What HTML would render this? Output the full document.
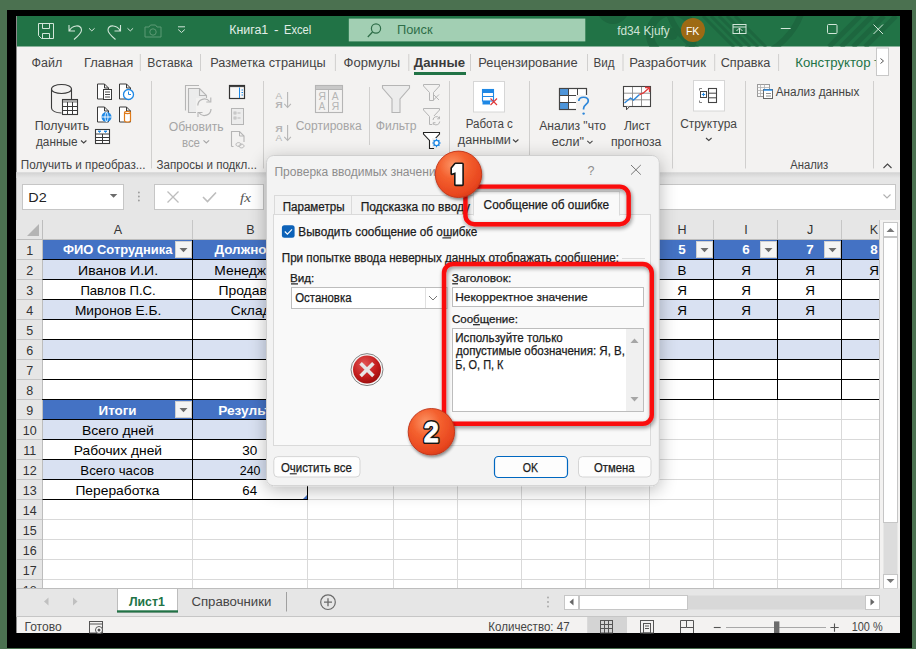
<!DOCTYPE html>
<html><head><meta charset="utf-8"><style>
html,body{margin:0;padding:0;width:916px;height:649px;overflow:hidden;background:#4b7150}
svg{display:block;font-family:'Liberation Sans', sans-serif}
</style></head><body>
<svg width="916" height="649" viewBox="0 0 916 649">
<defs>
<radialGradient id="gOrange" cx="0.38" cy="0.3" r="0.75">
 <stop offset="0" stop-color="#fb9466"/>
 <stop offset="0.4" stop-color="#f4612f"/>
 <stop offset="0.85" stop-color="#e8461f"/>
 <stop offset="1" stop-color="#d83c19"/>
</radialGradient>
<radialGradient id="gErr" cx="0.4" cy="0.3" r="0.8">
 <stop offset="0" stop-color="#e25555"/>
 <stop offset="0.6" stop-color="#c11a1a"/>
 <stop offset="1" stop-color="#8e0a0a"/>
</radialGradient>
<linearGradient id="gRibShadow" x1="0" y1="0" x2="0" y2="1">
 <stop offset="0" stop-color="#d2d2d2"/>
 <stop offset="1" stop-color="#e6e6e6"/>
</linearGradient>
<filter id="fDlg" x="-20%" y="-20%" width="140%" height="140%">
 <feGaussianBlur in="SourceAlpha" stdDeviation="9"/>
 <feOffset dx="0" dy="4"/>
 <feComponentTransfer><feFuncA type="linear" slope="0.28"/></feComponentTransfer>
 <feMerge><feMergeNode/><feMergeNode in="SourceGraphic"/></feMerge>
</filter>
<filter id="fRed" x="-20%" y="-20%" width="140%" height="140%">
 <feGaussianBlur in="SourceAlpha" stdDeviation="2.2"/>
 <feOffset dx="1" dy="2"/>
 <feComponentTransfer><feFuncA type="linear" slope="0.45"/></feComponentTransfer>
 <feMerge><feMergeNode/><feMergeNode in="SourceGraphic"/></feMerge>
</filter>
<filter id="fCirc" x="-30%" y="-30%" width="160%" height="160%">
 <feGaussianBlur in="SourceAlpha" stdDeviation="1.8"/>
 <feOffset dx="1" dy="2"/>
 <feComponentTransfer><feFuncA type="linear" slope="0.45"/></feComponentTransfer>
 <feMerge><feMergeNode/><feMergeNode in="SourceGraphic"/></feMerge>
</filter>
<clipPath id="cTitle"><rect x="16" y="16" width="884" height="30.5"/></clipPath>
<clipPath id="cGrid"><rect x="16" y="220" width="863.5" height="368.5"/></clipPath>
</defs>
<rect x="0" y="0" width="916.00" height="649.00" fill="#4b7150" />
<rect x="7" y="10" width="905.00" height="638.00" fill="#000" />
<rect x="16" y="16" width="884.00" height="617.00" fill="#f3f2f1" />
<rect x="16" y="16" width="884.00" height="30.50" fill="#217346" />
<g clip-path="url(#cTitle)" fill="none" opacity="1">
<circle cx="613" cy="8" r="16" fill="#1d673f" />
<circle cx="672" cy="34" r="22" fill="none" stroke="#1d673f" stroke-width="8" />
<circle cx="672" cy="34" r="6" fill="#1d673f" />
<circle cx="735" cy="-10" r="70" fill="none" stroke="#1d673f" stroke-width="6" />
<line x1="703" y1="16" x2="734" y2="47" stroke="#1d673f" stroke-width="3" />
<line x1="711" y1="16" x2="742" y2="47" stroke="#1d673f" stroke-width="3" />
<line x1="719" y1="16" x2="750" y2="47" stroke="#1d673f" stroke-width="3" />
<line x1="727" y1="16" x2="758" y2="47" stroke="#1d673f" stroke-width="3" />
<line x1="735" y1="16" x2="766" y2="47" stroke="#1d673f" stroke-width="3" />
<line x1="860" y1="16" x2="829" y2="47" stroke="#1d673f" stroke-width="5" />
<line x1="872" y1="16" x2="841" y2="47" stroke="#1d673f" stroke-width="5" />
<line x1="884" y1="16" x2="853" y2="47" stroke="#1d673f" stroke-width="5" />
<line x1="896" y1="16" x2="865" y2="47" stroke="#1d673f" stroke-width="5" />
</g>
<path d="M38.5,23.5 h15 v15 h-12 l-3,-3 z M42.5,23.5 v5 h7 v-5 M42.5,38.5 v-5 h7 v5" fill="none" stroke="#d2e6d9" stroke-width="1" />
<path d="M69,25 v6 h6 M69.5,30.5 C72,25 81,24 81.5,30 C81.5,33 77,37 74,39.5" fill="none" stroke="#d2e6d9" stroke-width="1.1" />
<path d="M89,28.3 l2.8,2.6 l2.8,-2.6" fill="none" stroke="#d2e6d9" stroke-width="1" />
<path d="M120.5,25 v6 h-6 M120,30.5 C117.5,25 108.5,24 108,30 C108,33 112.5,37 115.5,39.5" fill="none" stroke="#d2e6d9" stroke-width="1.1" />
<path d="M127.5,28.3 l2.8,2.6 l2.8,-2.6" fill="none" stroke="#d2e6d9" stroke-width="1" />
<path d="M145,27 h4 l1.5,-2 h5 l1.5,2 h4 v10 h-16 z" fill="none" stroke="#5d9a74" stroke-width="1" />
<circle cx="153" cy="32" r="3.2" fill="none" stroke="#5d9a74" stroke-width="1" />
<line x1="178" y1="26.8" x2="185" y2="26.8" stroke="#d2e6d9" stroke-width="1" />
<path d="M178.2,29.5 l3.3,3 l3.3,-3" fill="none" stroke="#d2e6d9" stroke-width="1" />
<text x="229.19" y="34.30" font-size="12.5" fill="#e3eee7" textLength="39.01" lengthAdjust="spacingAndGlyphs" >Книга1</text>
<text x="274.10" y="34.30" font-size="12.5" fill="#e3eee7" textLength="4.50" lengthAdjust="spacingAndGlyphs" >-</text>
<text x="284.09" y="34.30" font-size="12.5" fill="#e3eee7" textLength="27.15" lengthAdjust="spacingAndGlyphs" >Excel</text>
<rect x="348.8" y="18.6" width="236.50" height="22.80" fill="#a2cfb3" />
<circle cx="376" cy="28.5" r="4.6" fill="none" stroke="#2f6e49" stroke-width="1.2" />
<line x1="372.5" y1="32" x2="367.8" y2="37" stroke="#2f6e49" stroke-width="1.3" />
<text x="396.96" y="34.30" font-size="12.5" fill="#2f6e49" textLength="35.58" lengthAdjust="spacingAndGlyphs" >Поиск</text>
<text x="617.13" y="34.50" font-size="12.5" fill="#cfe3d6" textLength="52.59" lengthAdjust="spacingAndGlyphs" >fd34 Kjufy</text>
<circle cx="693" cy="30" r="12" fill="#9d6a14" />
<text x="685.88" y="34.60" font-size="11" fill="#fff" textLength="13.48" lengthAdjust="spacingAndGlyphs" >FK</text>
<rect x="733" y="24.5" width="13.00" height="9.00" fill="none" stroke="#d2e6d9" stroke-width="1" />
<line x1="733" y1="27" x2="746" y2="27" stroke="#d2e6d9" stroke-width="1" />
<path d="M736.5,31 l3,-3 l3,3 M739.5,28 v5" fill="none" stroke="#d2e6d9" stroke-width="1" />
<line x1="780.8" y1="28.5" x2="790.6" y2="28.5" stroke="#d2e6d9" stroke-width="1" />
<rect x="827.5" y="24.5" width="9.50" height="9.00" fill="none" stroke="#d2e6d9" stroke-width="1" rx="1" />
<path d="M873.5,24.5 l9.5,9.5 M883,24.5 l-9.5,9.5" fill="none" stroke="#d2e6d9" stroke-width="1" />
<line x1="16.5" y1="16" x2="16.5" y2="633" stroke="#8a8a8a" stroke-width="1" />
<text x="31.58" y="66.90" font-size="12.5" fill="#444" textLength="30.68" lengthAdjust="spacingAndGlyphs" >Файл</text>
<text x="83.95" y="66.90" font-size="12.5" fill="#444" textLength="49.33" lengthAdjust="spacingAndGlyphs" >Главная</text>
<text x="147.30" y="66.90" font-size="12.5" fill="#444" textLength="45.30" lengthAdjust="spacingAndGlyphs" >Вставка</text>
<text x="210.26" y="66.90" font-size="12.5" fill="#444" textLength="115.31" lengthAdjust="spacingAndGlyphs" >Разметка страницы</text>
<text x="343.55" y="66.90" font-size="12.5" fill="#444" textLength="56.65" lengthAdjust="spacingAndGlyphs" >Формулы</text>
<text x="478.25" y="66.90" font-size="12.5" fill="#444" textLength="99.31" lengthAdjust="spacingAndGlyphs" >Рецензирование</text>
<text x="593.55" y="66.90" font-size="12.5" fill="#444" textLength="21.05" lengthAdjust="spacingAndGlyphs" >Вид</text>
<text x="629.23" y="66.90" font-size="12.5" fill="#444" textLength="76.70" lengthAdjust="spacingAndGlyphs" >Разработчик</text>
<text x="720.65" y="66.90" font-size="12.5" fill="#444" textLength="49.75" lengthAdjust="spacingAndGlyphs" >Справка</text>
<text x="413.88" y="66.90" font-size="12.5" fill="#3b3b3b" font-weight="700" textLength="51.27" lengthAdjust="spacingAndGlyphs" >Данные</text>
<rect x="414" y="72" width="52.00" height="3.00" fill="#217346" />
<text x="795.22" y="66.90" font-size="12.5" fill="#217346" textLength="75.34" lengthAdjust="spacingAndGlyphs" >Конструктор</text>
<text x="874.00" y="66.90" font-size="12.5" fill="#217346" >т</text>
<line x1="140.3" y1="54" x2="140.3" y2="71" stroke="#d0cfce" stroke-width="1" />
<line x1="200.5" y1="54" x2="200.5" y2="71" stroke="#d0cfce" stroke-width="1" />
<line x1="335.4" y1="54" x2="335.4" y2="71" stroke="#d0cfce" stroke-width="1" />
<line x1="408.8" y1="54" x2="408.8" y2="71" stroke="#d0cfce" stroke-width="1" />
<line x1="470.5" y1="54" x2="470.5" y2="71" stroke="#d0cfce" stroke-width="1" />
<line x1="587.5" y1="54" x2="587.5" y2="71" stroke="#d0cfce" stroke-width="1" />
<line x1="623" y1="54" x2="623" y2="71" stroke="#d0cfce" stroke-width="1" />
<line x1="714.7" y1="54" x2="714.7" y2="71" stroke="#d0cfce" stroke-width="1" />
<line x1="778.6" y1="54" x2="778.6" y2="71" stroke="#d0cfce" stroke-width="1" />
<rect x="876.5" y="48" width="12.00" height="27.50" fill="#fff" stroke="#c8c8c8" stroke-width="1" />
<path d="M880.5,58.5 l3,2.5 l-3,2.5" fill="none" stroke="#555" stroke-width="1" />
<rect x="16.5" y="172.5" width="883.50" height="47.50" fill="#e6e6e6" />
<rect x="16.5" y="172.5" width="883.50" height="5.50" fill="url(#gRibShadow)" />
<line x1="16.5" y1="172.5" x2="900" y2="172.5" stroke="#dcdcdc" stroke-width="1" />
<line x1="151.5" y1="81" x2="151.5" y2="168.5" stroke="#d0cfce" stroke-width="1" />
<line x1="263.5" y1="81" x2="263.5" y2="168.5" stroke="#d0cfce" stroke-width="1" />
<line x1="529.5" y1="81" x2="529.5" y2="168.5" stroke="#d0cfce" stroke-width="1" />
<line x1="672.5" y1="81" x2="672.5" y2="168.5" stroke="#d0cfce" stroke-width="1" />
<line x1="745.5" y1="81" x2="745.5" y2="168.5" stroke="#d0cfce" stroke-width="1" />
<line x1="873.5" y1="81" x2="873.5" y2="168.5" stroke="#d0cfce" stroke-width="1" />
<text x="20.76" y="169.30" font-size="12.3" fill="#444" textLength="124.81" lengthAdjust="spacingAndGlyphs" >Получить и преобраз...</text>
<text x="156.62" y="169.30" font-size="12.3" fill="#444" textLength="100.33" lengthAdjust="spacingAndGlyphs" >Запросы и подкл...</text>
<text x="790.18" y="168.60" font-size="12.3" fill="#444" textLength="38.05" lengthAdjust="spacingAndGlyphs" >Анализ</text>
<line x1="369.5" y1="87" x2="369.5" y2="145" stroke="#d0cfce" stroke-width="1" />
<line x1="449.5" y1="81" x2="449.5" y2="168.5" stroke="#d0cfce" stroke-width="1" />
<path d="M51.5,89 v19 c0,3 4.5,5 10,5 M51.5,89 c0,-2.8 4.5,-4.5 10,-4.5 c5.5,0 10,1.7 10,4.5 c0,2.8 -4.5,4.5 -10,4.5 c-5.5,0 -10,-1.7 -10,-4.5 M71.5,89 v10" fill="none" stroke="#3a3a3a" stroke-width="1.1" />
<rect x="62.5" y="99.5" width="15.00" height="15.00" fill="#fff" stroke="#3a3a3a" stroke-width="1.1" />
<rect x="63" y="100" width="14.00" height="2.80" fill="#a8a8a8" />
<line x1="62.5" y1="106.5" x2="77.5" y2="106.5" stroke="#3a3a3a" stroke-width="1" />
<line x1="62.5" y1="110.5" x2="77.5" y2="110.5" stroke="#3a3a3a" stroke-width="1" />
<line x1="67.5" y1="102" x2="67.5" y2="114.5" stroke="#3a3a3a" stroke-width="1" />
<line x1="72.5" y1="102" x2="72.5" y2="114.5" stroke="#3a3a3a" stroke-width="1" />
<text x="34.70" y="129.90" font-size="12.5" fill="#444" textLength="54.61" lengthAdjust="spacingAndGlyphs" >Получить</text>
<text x="35.98" y="145.60" font-size="12.5" fill="#444" textLength="41.54" lengthAdjust="spacingAndGlyphs" >данные</text>
<path d="M81,140.5 l2.7,2.5 l2.7,-2.5" fill="none" stroke="#444" stroke-width="1.1" />
<path d="M97.5,84.0 h7 l4,4 v11 h-11 z M104.5,84.0 v4 h4" fill="#fff" stroke="#3a3a3a" stroke-width="1" />
<rect x="103.5" y="89.5" width="8.00" height="10.00" fill="#fff" stroke="#3a3a3a" stroke-width="1" />
<line x1="105" y1="92" x2="110" y2="92" stroke="#3a3a3a" stroke-width="0.9" />
<line x1="105" y1="94.5" x2="110" y2="94.5" stroke="#3a3a3a" stroke-width="0.9" />
<line x1="105" y1="97" x2="110" y2="97" stroke="#3a3a3a" stroke-width="0.9" />
<path d="M119.5,84.0 h7 l4,4 v11 h-11 z M126.5,84.0 v4 h4" fill="#fff" stroke="#3a3a3a" stroke-width="1" />
<circle cx="128.5" cy="94.5" r="5" fill="#fff" stroke="#1e88e5" stroke-width="1.3" />
<path d="M128.5,91.5 v3 h2.5" fill="none" stroke="#1e88e5" stroke-width="1" />
<path d="M97.5,107.0 h7 l4,4 v11 h-11 z M104.5,107.0 v4 h4" fill="#fff" stroke="#3a3a3a" stroke-width="1" />
<circle cx="106.5" cy="117" r="5" fill="#1e88e5" />
<path d="M101.5,117 h10 M106.5,112 c-2,3 -2,7 0,10 M106.5,112 c2,3 2,7 0,10" fill="none" stroke="#fff" stroke-width="0.9" />
<path d="M119.5,107.0 h7 l4,4 v11 h-11 z M126.5,107.0 v4 h4" fill="#fff" stroke="#3a3a3a" stroke-width="1" />
<path d="M124.5,112.5 c0,-1.5 6,-1.5 6,0 v8 c0,2 -6,2 -6,0 z M124.5,112.5 c0,1.5 6,1.5 6,0" fill="#fff" stroke="#e07b1a" stroke-width="1.2" />
<rect x="95.5" y="129.5" width="14.00" height="14.00" fill="#fff" stroke="#3a3a3a" stroke-width="1.1" />
<path d="M98,131 l1.5,1.5 l1.5,-1.5 z M104,131 l1.5,1.5 l1.5,-1.5 z" fill="#1e88e5" stroke="#1e88e5" stroke-width="0.8" />
<line x1="95.5" y1="134" x2="109.5" y2="134" stroke="#3a3a3a" stroke-width="1" />
<line x1="95.5" y1="137.5" x2="109.5" y2="137.5" stroke="#3a3a3a" stroke-width="1" />
<line x1="95.5" y1="140.5" x2="109.5" y2="140.5" stroke="#3a3a3a" stroke-width="1" />
<line x1="102.5" y1="134" x2="102.5" y2="143.5" stroke="#3a3a3a" stroke-width="1" />
<path d="M185.5,110.5 v-25 h13.5" fill="none" stroke="#b5b5b5" stroke-width="1.1" />
<path d="M188.5,88.5 h11 l7,7 v17 h-18 z" fill="#ececec" stroke="#b5b5b5" stroke-width="1.1" />
<path d="M199.5,88.5 v7 h7" fill="none" stroke="#b5b5b5" stroke-width="1.1" />
<rect x="196" y="98" width="16.00" height="18.00" fill="#f3f2f1" />
<path d="M197.8,105.5 a6.6,6.6 0 0 1 11.8,-4" fill="none" stroke="#b5b5b5" stroke-width="1.2" />
<path d="M210.8,97.5 v4.5 h-4.5" fill="none" stroke="#b5b5b5" stroke-width="1.1" />
<path d="M211,109 a6.6,6.6 0 0 1 -11.8,4" fill="none" stroke="#b5b5b5" stroke-width="1.2" />
<path d="M198,117 v-4.5 h4.5" fill="none" stroke="#b5b5b5" stroke-width="1.1" />
<text x="168.72" y="131.00" font-size="12.5" fill="#a5a5a5" textLength="54.97" lengthAdjust="spacingAndGlyphs" >Обновить</text>
<text x="181.91" y="146.50" font-size="12.5" fill="#a5a5a5" textLength="18.10" lengthAdjust="spacingAndGlyphs" >все</text>
<path d="M203.5,140.3 l2.8,2.6 l2.8,-2.6" fill="none" stroke="#a5a5a5" stroke-width="1.1" />
<rect x="229.5" y="85.5" width="15.00" height="13.00" fill="#f7f7f7" stroke="#333" stroke-width="1.2" />
<line x1="229.5" y1="86.6" x2="244.5" y2="86.6" stroke="#333" stroke-width="1" />
<line x1="239.5" y1="87.5" x2="239.5" y2="98" stroke="#1e88e5" stroke-width="1" />
<path d="M241.5,90 h1.5 M241.5,92.5 h1.5 M241.5,95 h1.5" fill="none" stroke="#1e88e5" stroke-width="1" />
<rect x="231.5" y="108.5" width="12.00" height="16.00" fill="#ececec" stroke="#b5b5b5" stroke-width="1" />
<rect x="234" y="112" width="2.00" height="2.00" fill="none" stroke="#b5b5b5" stroke-width="0.8" />
<line x1="237.5" y1="113" x2="240.5" y2="113" stroke="#b5b5b5" stroke-width="0.9" />
<rect x="234" y="117" width="2.00" height="2.00" fill="none" stroke="#b5b5b5" stroke-width="0.8" />
<line x1="237.5" y1="118" x2="240.5" y2="118" stroke="#b5b5b5" stroke-width="0.9" />
<path d="M231.5,146.5 v-15 h8 l4.5,4.5 v6" fill="none" stroke="#b5b5b5" stroke-width="1.1" />
<path d="M239.5,131.5 v4.5 h4.5" fill="none" stroke="#b5b5b5" stroke-width="1" />
<path d="M231.5,146.5 h2" fill="none" stroke="#b5b5b5" stroke-width="1.1" />
<path d="M236,144.5 c0,-2.5 5,-2.5 5,0 c0,2.5 -5,2.5 -5,0 M239,146 c0,-2.5 5,-2.5 5,0 c0,2.5 -5,2.5 -5,0" fill="none" stroke="#b5b5b5" stroke-width="1" />
<text x="275.48" y="98.60" font-size="9.5" fill="#b5b5b5" textLength="6.64" lengthAdjust="spacingAndGlyphs" >А</text>
<text x="275.32" y="107.90" font-size="9.5" fill="#b5b5b5" font-weight="700" textLength="7.47" lengthAdjust="spacingAndGlyphs" >Я</text>
<path d="M287.6,92 v15.5 M284.3,103.8 l3.3,3.7 l3.3,-3.7" fill="none" stroke="#b5b5b5" stroke-width="1.1" />
<text x="275.32" y="131.60" font-size="9.5" fill="#b5b5b5" font-weight="700" textLength="7.47" lengthAdjust="spacingAndGlyphs" >Я</text>
<text x="275.48" y="140.90" font-size="9.5" fill="#b5b5b5" textLength="6.64" lengthAdjust="spacingAndGlyphs" >А</text>
<path d="M287.6,125 v15.5 M284.3,136.8 l3.3,3.7 l3.3,-3.7" fill="none" stroke="#b5b5b5" stroke-width="1.1" />
<rect x="315.5" y="85.5" width="27.00" height="27.00" fill="#f3f2f1" stroke="#b5b5b5" stroke-width="1.1" />
<rect x="316" y="86" width="26.00" height="3.50" fill="#c8c8c8" />
<line x1="315.5" y1="89.5" x2="342.5" y2="89.5" stroke="#b5b5b5" stroke-width="1" />
<line x1="328.5" y1="89.5" x2="328.5" y2="112.5" stroke="#b5b5b5" stroke-width="1" />
<text x="318.19" y="100.00" font-size="10" fill="#b5b5b5" textLength="7.78" lengthAdjust="spacingAndGlyphs" >Я</text>
<text x="318.68" y="109.80" font-size="10" fill="#b5b5b5" textLength="6.44" lengthAdjust="spacingAndGlyphs" >А</text>
<text x="331.88" y="100.00" font-size="10" fill="#b5b5b5" textLength="6.84" lengthAdjust="spacingAndGlyphs" >А</text>
<text x="331.59" y="109.80" font-size="10" fill="#b5b5b5" textLength="7.78" lengthAdjust="spacingAndGlyphs" >Я</text>
<text x="295.69" y="130.20" font-size="12.5" fill="#a5a5a5" textLength="65.91" lengthAdjust="spacingAndGlyphs" >Сортировка</text>
<path d="M382.5,85.5 h27 v2.5 l-9.5,11 v13.5 h-8 v-13.5 l-9.5,-11 z" fill="#ececec" stroke="#b5b5b5" stroke-width="1.1" />
<text x="375.71" y="130.20" font-size="12.5" fill="#a5a5a5" textLength="40.88" lengthAdjust="spacingAndGlyphs" >Фильтр</text>
<path d="M423.5,84.5 h16 v1.5 l-6,6.5 v8 h-4 v-8 l-6,-6.5 z" fill="none" stroke="#b5b5b5" stroke-width="1" />
<path d="M433.5,94.5 l5.5,5.5 M439,94.5 l-5.5,5.5" fill="none" stroke="#b5b5b5" stroke-width="1" />
<path d="M423.5,108.5 h16 v1.5 l-6,6.5 v8 h-4 v-8 l-6,-6.5 z" fill="none" stroke="#b5b5b5" stroke-width="1" />
<rect x="432" y="116" width="9.00" height="10.00" fill="#f3f2f1" />
<path d="M433,120 a3.5,3.5 0 0 1 6.3,-2 M439.5,116.5 v2.3 h-2.3 M439.7,121.5 a3.5,3.5 0 0 1 -6.3,2 M433.2,125 v-2.3 h2.3" fill="none" stroke="#b5b5b5" stroke-width="1" />
<path d="M423.5,132.5 h16 v1.5 l-6,6.5 v8 h-4 v-8 l-6,-6.5 z" fill="#fff" stroke="#222" stroke-width="1.1" />
<rect x="432" y="138" width="10.00" height="10.00" fill="#f3f2f1" />
<circle cx="436.5" cy="143" r="2.6" fill="#fff" stroke="#1e88e5" stroke-width="1.3" />
<path d="M436.5,138.8 v1.5 M436.5,145.7 v1.5 M432.3,143 h1.5 M439.2,143 h1.5 M433.6,140.1 l1,1 M438.4,144.9 l1,1 M433.6,145.9 l1,-1 M438.4,141.1 l1,-1" fill="none" stroke="#1e88e5" stroke-width="1.1" />
<rect x="473.5" y="81.5" width="31.00" height="30.50" fill="#fff" stroke="#d6d6d6" stroke-width="1" />
<rect x="482.5" y="89.5" width="11.00" height="11.50" fill="#fff" stroke="#1e88e5" stroke-width="1.1" />
<rect x="482.5" y="89.5" width="11.00" height="3.50" fill="#1e88e5" />
<line x1="482.5" y1="96.5" x2="493.5" y2="96.5" stroke="#1e88e5" stroke-width="1" />
<rect x="482.5" y="101" width="7.50" height="3.50" fill="#1e88e5" />
<path d="M490.5,98.5 l6.5,6.5 M497,98.5 l-6.5,6.5" fill="none" stroke="#e03a3a" stroke-width="1.2" />
<text x="465.66" y="128.00" font-size="12.5" fill="#444" textLength="47.24" lengthAdjust="spacingAndGlyphs" >Работа с</text>
<text x="457.88" y="144.40" font-size="12.5" fill="#444" textLength="53.00" lengthAdjust="spacingAndGlyphs" >данными</text>
<path d="M513,139.5 l2.7,2.5 l2.7,-2.5" fill="none" stroke="#444" stroke-width="1.1" />
<rect x="559.5" y="88.5" width="27.00" height="21.00" fill="#fff" stroke="#444" stroke-width="1.1" />
<rect x="559.5" y="88.5" width="9.00" height="7.00" fill="#4e95d9" />
<rect x="559.5" y="102.5" width="9.00" height="7.00" fill="#4e95d9" />
<line x1="559.5" y1="95.5" x2="586.5" y2="95.5" stroke="#444" stroke-width="1" />
<line x1="559.5" y1="102.5" x2="586.5" y2="102.5" stroke="#444" stroke-width="1" />
<line x1="568.5" y1="88.5" x2="568.5" y2="109.5" stroke="#444" stroke-width="1" />
<line x1="577.5" y1="88.5" x2="577.5" y2="109.5" stroke="#444" stroke-width="1" />
<rect x="559.5" y="88.5" width="27.00" height="21.00" fill="none" stroke="#444" stroke-width="1.1" />
<rect x="576" y="95" width="15.00" height="20.00" fill="#f3f2f1" />
<path d="M578.8,101 c0,-5 9.5,-5 9.5,0 c0,3.3 -4.7,3.6 -4.7,7.3 v1.2" fill="none" stroke="#2d86d9" stroke-width="1.7" />
<circle cx="583.6" cy="113.6" r="1.2" fill="#2d86d9" />
<text x="539.18" y="129.90" font-size="12.5" fill="#444" textLength="66.93" lengthAdjust="spacingAndGlyphs" >Анализ "что</text>
<text x="551.66" y="145.50" font-size="12.5" fill="#444" textLength="32.38" lengthAdjust="spacingAndGlyphs" >если"</text>
<path d="M587.3,140.8 l2.6,2.5 l2.6,-2.5" fill="none" stroke="#444" stroke-width="1.1" />
<rect x="623.5" y="86.5" width="27.00" height="20.00" fill="#fff" stroke="#444" stroke-width="1" />
<line x1="623.5" y1="93.2" x2="650.5" y2="93.2" stroke="#888" stroke-width="0.9" />
<line x1="623.5" y1="99.8" x2="650.5" y2="99.8" stroke="#888" stroke-width="0.9" />
<line x1="632.5" y1="86.5" x2="632.5" y2="106.5" stroke="#888" stroke-width="0.9" />
<line x1="641.5" y1="86.5" x2="641.5" y2="106.5" stroke="#888" stroke-width="0.9" />
<rect x="623.5" y="86.5" width="27.00" height="20.00" fill="none" stroke="#444" stroke-width="1.1" />
<path d="M624.5,103 l6,-5 l3,2 l6,-5.5" fill="none" stroke="#2d86d9" stroke-width="1.4" />
<path d="M639.5,94.5 l4,-1.5 l5.5,-5" fill="none" stroke="#e03a3a" stroke-width="1.4" />
<path d="M645,87.5 h4.5 v4.5" fill="none" stroke="#e03a3a" stroke-width="1.3" />
<path d="M626.5,106.5 v3.3 l3,-3.3" fill="#fff" stroke="#444" stroke-width="1" />
<text x="623.89" y="129.90" font-size="12.5" fill="#444" textLength="26.31" lengthAdjust="spacingAndGlyphs" >Лист</text>
<text x="610.96" y="145.50" font-size="12.5" fill="#444" textLength="50.44" lengthAdjust="spacingAndGlyphs" >прогноза</text>
<rect x="693.5" y="80.5" width="31.00" height="30.50" fill="#fff" stroke="#d6d6d6" stroke-width="1" />
<rect x="708.5" y="88.5" width="8.00" height="14.00" fill="none" stroke="#444" stroke-width="1.1" />
<line x1="708.5" y1="93.2" x2="716.5" y2="93.2" stroke="#444" stroke-width="1" />
<line x1="708.5" y1="97.8" x2="716.5" y2="97.8" stroke="#444" stroke-width="1" />
<rect x="700.5" y="91.5" width="6.00" height="6.00" fill="none" stroke="#444" stroke-width="1" />
<path d="M701.8,94.5 h3.4 M703.5,92.8 v3.4" fill="none" stroke="#1e88e5" stroke-width="1.1" />
<path d="M702,88.5 h-2.5 v2 M702,102.5 h-2.5 v-2" fill="none" stroke="#777" stroke-width="0.9" />
<text x="680.19" y="128.00" font-size="12.5" fill="#444" textLength="56.81" lengthAdjust="spacingAndGlyphs" >Структура</text>
<path d="M706,138 l2.8,2.5 l2.8,-2.5" fill="none" stroke="#444" stroke-width="1.1" />
<rect x="757.5" y="84.5" width="12.00" height="12.00" fill="#fafafa" stroke="#9a9a9a" stroke-width="1" />
<line x1="757.5" y1="87.5" x2="769.5" y2="87.5" stroke="#b0b0b0" stroke-width="0.8" />
<line x1="757.5" y1="90.5" x2="769.5" y2="90.5" stroke="#b0b0b0" stroke-width="0.8" />
<line x1="757.5" y1="93.5" x2="769.5" y2="93.5" stroke="#b0b0b0" stroke-width="0.8" />
<line x1="760.5" y1="84.5" x2="760.5" y2="96.5" stroke="#b0b0b0" stroke-width="0.8" />
<line x1="764.5" y1="84.5" x2="764.5" y2="96.5" stroke="#b0b0b0" stroke-width="0.8" />
<rect x="763.5" y="89.5" width="9.00" height="9.00" fill="#fff" stroke="#666" stroke-width="1" />
<line x1="763.5" y1="90" x2="772.5" y2="90" stroke="#1e88e5" stroke-width="1.4" />
<line x1="766" y1="93.5" x2="771" y2="93.5" stroke="#777" stroke-width="0.8" />
<line x1="766" y1="96" x2="771" y2="96" stroke="#777" stroke-width="0.8" />
<text x="775.78" y="96.00" font-size="12.5" fill="#444" textLength="83.65" lengthAdjust="spacingAndGlyphs" >Анализ данных</text>
<path d="M883.5,168 l4,-4 l4,4" fill="none" stroke="#444" stroke-width="1.1" />
<rect x="22.5" y="184.5" width="101.00" height="25.00" fill="#fff" stroke="#c6c6c6" stroke-width="1" />
<text x="28.32" y="202.00" font-size="12.5" fill="#222" textLength="18.41" lengthAdjust="spacingAndGlyphs" >D2</text>
<path d="M109.8,194 h7.5 l-3.75,3.8 z" fill="#6b6b6b" />
<circle cx="138.9" cy="192.5" r="0.9" fill="#9a9a9a" />
<circle cx="138.9" cy="196.5" r="0.9" fill="#9a9a9a" />
<circle cx="138.9" cy="200.5" r="0.9" fill="#9a9a9a" />
<rect x="154.5" y="184.5" width="109.00" height="25.00" fill="#fff" stroke="#c6c6c6" stroke-width="1" />
<path d="M167.5,191.5 l11,11 M178.5,191.5 l-11,11" fill="none" stroke="#bdbdbd" stroke-width="1.3" />
<path d="M203,197 l4.5,4.5 l8.5,-9" fill="none" stroke="#bdbdbd" stroke-width="1.6" />
<text x="240" y="202" font-family="Liberation Serif" font-style="italic" font-size="13" fill="#555" textLength="11" lengthAdjust="spacingAndGlyphs">fx</text>
<rect x="266.5" y="184.5" width="629.00" height="25.00" fill="#fff" stroke="#c6c6c6" stroke-width="1" />
<path d="M883.5,194.5 l3.5,3.5 l3.5,-3.5" fill="none" stroke="#b0b0b0" stroke-width="1.1" />
<g clip-path="url(#cGrid)">
<rect x="16.5" y="220" width="863.00" height="368.50" fill="#fff" />
<rect x="16.5" y="220" width="863.00" height="19.50" fill="#e6e6e6" />
<rect x="16.5" y="220" width="26.00" height="368.50" fill="#e6e6e6" />
<path d="M27,236 h12 v-12 z" fill="#b4b4b4" />
<line x1="192.5" y1="239.5" x2="192.5" y2="588.5" stroke="#d9d9d9" stroke-width="1" />
<line x1="307.5" y1="239.5" x2="307.5" y2="588.5" stroke="#d9d9d9" stroke-width="1" />
<line x1="393.5" y1="239.5" x2="393.5" y2="588.5" stroke="#d9d9d9" stroke-width="1" />
<line x1="457.5" y1="239.5" x2="457.5" y2="588.5" stroke="#d9d9d9" stroke-width="1" />
<line x1="521.5" y1="239.5" x2="521.5" y2="588.5" stroke="#d9d9d9" stroke-width="1" />
<line x1="585.5" y1="239.5" x2="585.5" y2="588.5" stroke="#d9d9d9" stroke-width="1" />
<line x1="649.5" y1="239.5" x2="649.5" y2="588.5" stroke="#d9d9d9" stroke-width="1" />
<line x1="713.5" y1="239.5" x2="713.5" y2="588.5" stroke="#d9d9d9" stroke-width="1" />
<line x1="777.5" y1="239.5" x2="777.5" y2="588.5" stroke="#d9d9d9" stroke-width="1" />
<line x1="841.5" y1="239.5" x2="841.5" y2="588.5" stroke="#d9d9d9" stroke-width="1" />
<line x1="905.5" y1="239.5" x2="905.5" y2="588.5" stroke="#d9d9d9" stroke-width="1" />
<line x1="42.5" y1="259.5" x2="879.5" y2="259.5" stroke="#d9d9d9" stroke-width="1" />
<line x1="42.5" y1="279.5" x2="879.5" y2="279.5" stroke="#d9d9d9" stroke-width="1" />
<line x1="42.5" y1="299.5" x2="879.5" y2="299.5" stroke="#d9d9d9" stroke-width="1" />
<line x1="42.5" y1="319.5" x2="879.5" y2="319.5" stroke="#d9d9d9" stroke-width="1" />
<line x1="42.5" y1="339.5" x2="879.5" y2="339.5" stroke="#d9d9d9" stroke-width="1" />
<line x1="42.5" y1="359.5" x2="879.5" y2="359.5" stroke="#d9d9d9" stroke-width="1" />
<line x1="42.5" y1="379.5" x2="879.5" y2="379.5" stroke="#d9d9d9" stroke-width="1" />
<line x1="42.5" y1="399.5" x2="879.5" y2="399.5" stroke="#d9d9d9" stroke-width="1" />
<line x1="42.5" y1="419.5" x2="879.5" y2="419.5" stroke="#d9d9d9" stroke-width="1" />
<line x1="42.5" y1="439.5" x2="879.5" y2="439.5" stroke="#d9d9d9" stroke-width="1" />
<line x1="42.5" y1="459.5" x2="879.5" y2="459.5" stroke="#d9d9d9" stroke-width="1" />
<line x1="42.5" y1="479.5" x2="879.5" y2="479.5" stroke="#d9d9d9" stroke-width="1" />
<line x1="42.5" y1="499.5" x2="879.5" y2="499.5" stroke="#d9d9d9" stroke-width="1" />
<line x1="42.5" y1="519.5" x2="879.5" y2="519.5" stroke="#d9d9d9" stroke-width="1" />
<line x1="42.5" y1="539.5" x2="879.5" y2="539.5" stroke="#d9d9d9" stroke-width="1" />
<line x1="42.5" y1="559.5" x2="879.5" y2="559.5" stroke="#d9d9d9" stroke-width="1" />
<line x1="42.5" y1="579.5" x2="879.5" y2="579.5" stroke="#d9d9d9" stroke-width="1" />
<line x1="42.5" y1="599.5" x2="879.5" y2="599.5" stroke="#d9d9d9" stroke-width="1" />
<line x1="192.5" y1="220" x2="192.5" y2="239.5" stroke="#c6c6c6" stroke-width="1" />
<line x1="307.5" y1="220" x2="307.5" y2="239.5" stroke="#c6c6c6" stroke-width="1" />
<line x1="393.5" y1="220" x2="393.5" y2="239.5" stroke="#c6c6c6" stroke-width="1" />
<line x1="457.5" y1="220" x2="457.5" y2="239.5" stroke="#c6c6c6" stroke-width="1" />
<line x1="521.5" y1="220" x2="521.5" y2="239.5" stroke="#c6c6c6" stroke-width="1" />
<line x1="585.5" y1="220" x2="585.5" y2="239.5" stroke="#c6c6c6" stroke-width="1" />
<line x1="649.5" y1="220" x2="649.5" y2="239.5" stroke="#c6c6c6" stroke-width="1" />
<line x1="713.5" y1="220" x2="713.5" y2="239.5" stroke="#c6c6c6" stroke-width="1" />
<line x1="777.5" y1="220" x2="777.5" y2="239.5" stroke="#c6c6c6" stroke-width="1" />
<line x1="841.5" y1="220" x2="841.5" y2="239.5" stroke="#c6c6c6" stroke-width="1" />
<line x1="905.5" y1="220" x2="905.5" y2="239.5" stroke="#c6c6c6" stroke-width="1" />
<line x1="16.5" y1="259.5" x2="42.5" y2="259.5" stroke="#c6c6c6" stroke-width="1" />
<line x1="16.5" y1="279.5" x2="42.5" y2="279.5" stroke="#c6c6c6" stroke-width="1" />
<line x1="16.5" y1="299.5" x2="42.5" y2="299.5" stroke="#c6c6c6" stroke-width="1" />
<line x1="16.5" y1="319.5" x2="42.5" y2="319.5" stroke="#c6c6c6" stroke-width="1" />
<line x1="16.5" y1="339.5" x2="42.5" y2="339.5" stroke="#c6c6c6" stroke-width="1" />
<line x1="16.5" y1="359.5" x2="42.5" y2="359.5" stroke="#c6c6c6" stroke-width="1" />
<line x1="16.5" y1="379.5" x2="42.5" y2="379.5" stroke="#c6c6c6" stroke-width="1" />
<line x1="16.5" y1="399.5" x2="42.5" y2="399.5" stroke="#c6c6c6" stroke-width="1" />
<line x1="16.5" y1="419.5" x2="42.5" y2="419.5" stroke="#c6c6c6" stroke-width="1" />
<line x1="16.5" y1="439.5" x2="42.5" y2="439.5" stroke="#c6c6c6" stroke-width="1" />
<line x1="16.5" y1="459.5" x2="42.5" y2="459.5" stroke="#c6c6c6" stroke-width="1" />
<line x1="16.5" y1="479.5" x2="42.5" y2="479.5" stroke="#c6c6c6" stroke-width="1" />
<line x1="16.5" y1="499.5" x2="42.5" y2="499.5" stroke="#c6c6c6" stroke-width="1" />
<line x1="16.5" y1="519.5" x2="42.5" y2="519.5" stroke="#c6c6c6" stroke-width="1" />
<line x1="16.5" y1="539.5" x2="42.5" y2="539.5" stroke="#c6c6c6" stroke-width="1" />
<line x1="16.5" y1="559.5" x2="42.5" y2="559.5" stroke="#c6c6c6" stroke-width="1" />
<line x1="16.5" y1="579.5" x2="42.5" y2="579.5" stroke="#c6c6c6" stroke-width="1" />
<line x1="16.5" y1="599.5" x2="42.5" y2="599.5" stroke="#c6c6c6" stroke-width="1" />
<line x1="42.5" y1="220" x2="42.5" y2="588.5" stroke="#bdbdbd" stroke-width="1" />
<line x1="16.5" y1="239.5" x2="879.5" y2="239.5" stroke="#bdbdbd" stroke-width="1" />
<text x="118.00" y="234.00" font-size="12.5" fill="#333" text-anchor="middle" >A</text>
<text x="250.50" y="234.00" font-size="12.5" fill="#333" text-anchor="middle" >B</text>
<text x="351.00" y="234.00" font-size="12.5" fill="#333" text-anchor="middle" >C</text>
<text x="426.00" y="234.00" font-size="12.5" fill="#333" text-anchor="middle" >D</text>
<text x="490.00" y="234.00" font-size="12.5" fill="#333" text-anchor="middle" >E</text>
<text x="554.00" y="234.00" font-size="12.5" fill="#333" text-anchor="middle" >F</text>
<text x="618.00" y="234.00" font-size="12.5" fill="#333" text-anchor="middle" >G</text>
<text x="682.00" y="234.00" font-size="12.5" fill="#333" text-anchor="middle" >H</text>
<text x="746.00" y="234.00" font-size="12.5" fill="#333" text-anchor="middle" >I</text>
<text x="810.00" y="234.00" font-size="12.5" fill="#333" text-anchor="middle" >J</text>
<text x="874.00" y="234.00" font-size="12.5" fill="#333" text-anchor="middle" >K</text>
<text x="29.70" y="255.00" font-size="12.5" fill="#333" text-anchor="middle" >1</text>
<text x="29.70" y="275.00" font-size="12.5" fill="#333" text-anchor="middle" >2</text>
<text x="29.70" y="295.00" font-size="12.5" fill="#333" text-anchor="middle" >3</text>
<text x="29.70" y="315.00" font-size="12.5" fill="#333" text-anchor="middle" >4</text>
<text x="29.70" y="335.00" font-size="12.5" fill="#333" text-anchor="middle" >5</text>
<text x="29.70" y="355.00" font-size="12.5" fill="#333" text-anchor="middle" >6</text>
<text x="29.70" y="375.00" font-size="12.5" fill="#333" text-anchor="middle" >7</text>
<text x="29.70" y="395.00" font-size="12.5" fill="#333" text-anchor="middle" >8</text>
<text x="29.70" y="415.00" font-size="12.5" fill="#333" text-anchor="middle" >9</text>
<text x="29.70" y="435.00" font-size="12.5" fill="#333" text-anchor="middle" >10</text>
<text x="29.70" y="455.00" font-size="12.5" fill="#333" text-anchor="middle" >11</text>
<text x="29.70" y="475.00" font-size="12.5" fill="#333" text-anchor="middle" >12</text>
<text x="29.70" y="495.00" font-size="12.5" fill="#333" text-anchor="middle" >13</text>
<text x="29.70" y="515.00" font-size="12.5" fill="#333" text-anchor="middle" >14</text>
<text x="29.70" y="535.00" font-size="12.5" fill="#333" text-anchor="middle" >15</text>
<text x="29.70" y="555.00" font-size="12.5" fill="#333" text-anchor="middle" >16</text>
<text x="29.70" y="575.00" font-size="12.5" fill="#333" text-anchor="middle" >17</text>
<text x="29.70" y="595.00" font-size="12.5" fill="#333" text-anchor="middle" >18</text>
<rect x="43" y="240" width="836.50" height="19.00" fill="#4472c4" />
<rect x="43" y="260" width="836.50" height="19.00" fill="#d9e1f2" />
<rect x="43" y="300" width="836.50" height="19.00" fill="#d9e1f2" />
<rect x="43" y="340" width="836.50" height="19.00" fill="#d9e1f2" />
<rect x="43" y="400" width="264.00" height="19.00" fill="#4472c4" />
<rect x="43" y="420" width="264.00" height="19.00" fill="#d9e1f2" />
<rect x="43" y="460" width="264.00" height="19.00" fill="#d9e1f2" />
<line x1="42.5" y1="259.5" x2="879.5" y2="259.5" stroke="#000" stroke-width="1" />
<line x1="42.5" y1="279.5" x2="879.5" y2="279.5" stroke="#000" stroke-width="1" />
<line x1="42.5" y1="299.5" x2="879.5" y2="299.5" stroke="#000" stroke-width="1" />
<line x1="42.5" y1="319.5" x2="879.5" y2="319.5" stroke="#000" stroke-width="1" />
<line x1="42.5" y1="339.5" x2="879.5" y2="339.5" stroke="#000" stroke-width="1" />
<line x1="42.5" y1="359.5" x2="879.5" y2="359.5" stroke="#000" stroke-width="1" />
<line x1="42.5" y1="379.5" x2="879.5" y2="379.5" stroke="#000" stroke-width="1" />
<line x1="42.5" y1="399.5" x2="879.5" y2="399.5" stroke="#000" stroke-width="1" />
<line x1="192.5" y1="240" x2="192.5" y2="400" stroke="#000" stroke-width="1" />
<line x1="307.5" y1="240" x2="307.5" y2="400" stroke="#000" stroke-width="1" />
<line x1="393.5" y1="240" x2="393.5" y2="400" stroke="#000" stroke-width="1" />
<line x1="457.5" y1="240" x2="457.5" y2="400" stroke="#000" stroke-width="1" />
<line x1="521.5" y1="240" x2="521.5" y2="400" stroke="#000" stroke-width="1" />
<line x1="585.5" y1="240" x2="585.5" y2="400" stroke="#000" stroke-width="1" />
<line x1="649.5" y1="240" x2="649.5" y2="400" stroke="#000" stroke-width="1" />
<line x1="713.5" y1="240" x2="713.5" y2="400" stroke="#000" stroke-width="1" />
<line x1="777.5" y1="240" x2="777.5" y2="400" stroke="#000" stroke-width="1" />
<line x1="841.5" y1="240" x2="841.5" y2="400" stroke="#000" stroke-width="1" />
<line x1="905.5" y1="240" x2="905.5" y2="400" stroke="#000" stroke-width="1" />
<line x1="42.5" y1="399.5" x2="879.5" y2="399.5" stroke="#000" stroke-width="1" />
<line x1="42.5" y1="419.5" x2="307.5" y2="419.5" stroke="#000" stroke-width="1" />
<line x1="42.5" y1="439.5" x2="307.5" y2="439.5" stroke="#000" stroke-width="1" />
<line x1="42.5" y1="459.5" x2="307.5" y2="459.5" stroke="#000" stroke-width="1" />
<line x1="42.5" y1="479.5" x2="307.5" y2="479.5" stroke="#000" stroke-width="1" />
<line x1="42.5" y1="499.5" x2="307.5" y2="499.5" stroke="#000" stroke-width="1" />
<line x1="42.5" y1="399.5" x2="307.5" y2="399.5" stroke="#000" stroke-width="1" />
<line x1="192.5" y1="400" x2="192.5" y2="500" stroke="#000" stroke-width="1" />
<line x1="307.5" y1="400" x2="307.5" y2="500" stroke="#000" stroke-width="1" />
<path d="M303,499 h4 v-4 z" fill="#4472c4" />
<rect x="175.5" y="241.5" width="16.00" height="16.00" fill="#f4f4f4" stroke="#d0d0d0" stroke-width="1" />
<path d="M179.5,248 h8 l-4,4.2 z" fill="#6b6b6b" />
<rect x="696.5" y="241.5" width="16.00" height="16.00" fill="#f4f4f4" stroke="#d0d0d0" stroke-width="1" />
<path d="M700.5,248 h8 l-4,4.2 z" fill="#6b6b6b" />
<rect x="760.5" y="241.5" width="16.00" height="16.00" fill="#f4f4f4" stroke="#d0d0d0" stroke-width="1" />
<path d="M764.5,248 h8 l-4,4.2 z" fill="#6b6b6b" />
<rect x="824.5" y="241.5" width="16.00" height="16.00" fill="#f4f4f4" stroke="#d0d0d0" stroke-width="1" />
<path d="M828.5,248 h8 l-4,4.2 z" fill="#6b6b6b" />
<rect x="175.5" y="401.5" width="16.00" height="16.00" fill="#f4f4f4" stroke="#d0d0d0" stroke-width="1" />
<path d="M179.5,408 h8 l-4,4.2 z" fill="#6b6b6b" />
<text x="63.06" y="254.40" font-size="13.4" fill="#fff" font-weight="700" textLength="109.36" lengthAdjust="spacingAndGlyphs" >ФИО Сотрудника</text>
<text x="214.48" y="254.40" font-size="13.4" fill="#fff" font-weight="700" textLength="74.27" lengthAdjust="spacingAndGlyphs" >Должность</text>
<text x="78.05" y="274.60" font-size="13.4" fill="#000" textLength="80.03" lengthAdjust="spacingAndGlyphs" >Иванов И.И.</text>
<text x="214.37" y="274.60" font-size="13.4" fill="#000" textLength="67.11" lengthAdjust="spacingAndGlyphs" >Менеджер</text>
<text x="80.39" y="294.60" font-size="13.4" fill="#000" textLength="75.36" lengthAdjust="spacingAndGlyphs" >Павлов П.С.</text>
<text x="218.48" y="294.60" font-size="13.4" fill="#000" textLength="63.94" lengthAdjust="spacingAndGlyphs" >Продавец</text>
<text x="74.93" y="314.60" font-size="13.4" fill="#000" textLength="86.27" lengthAdjust="spacingAndGlyphs" >Миронов Е.Б.</text>
<text x="230.80" y="314.60" font-size="13.4" fill="#000" textLength="39.74" lengthAdjust="spacingAndGlyphs" >Склад</text>
<text x="98.57" y="414.70" font-size="13.4" fill="#fff" font-weight="700" textLength="37.91" lengthAdjust="spacingAndGlyphs" >Итоги</text>
<text x="218.21" y="414.70" font-size="13.4" fill="#fff" font-weight="700" textLength="67.16" lengthAdjust="spacingAndGlyphs" >Результат</text>
<text x="81.96" y="434.70" font-size="13.4" fill="#000" textLength="71.90" lengthAdjust="spacingAndGlyphs" >Всего дней</text>
<text x="73.83" y="454.70" font-size="13.4" fill="#000" textLength="88.17" lengthAdjust="spacingAndGlyphs" >Рабочих дней</text>
<text x="242.18" y="454.70" font-size="13.4" fill="#000" textLength="15.04" lengthAdjust="spacingAndGlyphs" >30</text>
<text x="80.37" y="474.70" font-size="13.4" fill="#000" textLength="73.76" lengthAdjust="spacingAndGlyphs" >Всего часов</text>
<text x="239.78" y="474.70" font-size="13.4" fill="#000" textLength="20.71" lengthAdjust="spacingAndGlyphs" >240</text>
<text x="75.43" y="494.70" font-size="13.4" fill="#000" textLength="84.02" lengthAdjust="spacingAndGlyphs" >Переработка</text>
<text x="242.28" y="494.70" font-size="13.4" fill="#000" textLength="14.76" lengthAdjust="spacingAndGlyphs" >64</text>
<text x="682.00" y="254.40" font-size="13.4" fill="#fff" font-weight="700" text-anchor="middle" >5</text>
<text x="746.00" y="254.40" font-size="13.4" fill="#fff" font-weight="700" text-anchor="middle" >6</text>
<text x="810.00" y="254.40" font-size="13.4" fill="#fff" font-weight="700" text-anchor="middle" >7</text>
<text x="874.00" y="254.40" font-size="13.4" fill="#fff" font-weight="700" text-anchor="middle" >8</text>
<text x="682.00" y="274.60" font-size="13.4" fill="#000" text-anchor="middle" >В</text>
<text x="746.00" y="274.60" font-size="13.4" fill="#000" text-anchor="middle" >Я</text>
<text x="810.00" y="274.60" font-size="13.4" fill="#000" text-anchor="middle" >Я</text>
<text x="874.00" y="274.60" font-size="13.4" fill="#000" text-anchor="middle" >Я</text>
<text x="682.00" y="294.60" font-size="13.4" fill="#000" text-anchor="middle" >Я</text>
<text x="746.00" y="294.60" font-size="13.4" fill="#000" text-anchor="middle" >Я</text>
<text x="810.00" y="294.60" font-size="13.4" fill="#000" text-anchor="middle" >Я</text>
<text x="682.00" y="314.60" font-size="13.4" fill="#000" text-anchor="middle" >Я</text>
<text x="746.00" y="314.60" font-size="13.4" fill="#000" text-anchor="middle" >Я</text>
<text x="810.00" y="314.60" font-size="13.4" fill="#000" text-anchor="middle" >Я</text>
</g>
<line x1="879.5" y1="220" x2="879.5" y2="588.5" stroke="#c6c6c6" stroke-width="1" />
<rect x="883.5" y="222.5" width="14.00" height="366.00" fill="#dcdcdc" />
<rect x="883.5" y="222.5" width="14.00" height="14.00" fill="#fff" stroke="#c6c6c6" stroke-width="1" />
<path d="M886.5,232 h8 l-4,-4 z" fill="#777" />
<rect x="883.5" y="237.5" width="14.00" height="285.00" fill="#fff" stroke="#c6c6c6" stroke-width="1" />
<rect x="883.5" y="574.5" width="14.00" height="14.00" fill="#fff" stroke="#c6c6c6" stroke-width="1" />
<path d="M886.5,579 h8 l-4,4 z" fill="#777" />
<rect x="16.5" y="588.5" width="883.50" height="28.00" fill="#e6e6e6" />
<line x1="16.5" y1="588.5" x2="879.5" y2="588.5" stroke="#bdbdbd" stroke-width="1" />
<line x1="16.5" y1="616.5" x2="900" y2="616.5" stroke="#c6c6c6" stroke-width="1" />
<path d="M48.5,597.5 v8 l-4.5,-4 z" fill="#c0c0c0" />
<path d="M73,597.5 v8 l4.5,-4 z" fill="#c0c0c0" />
<rect x="117.5" y="588.5" width="60.00" height="24.00" fill="#fff" stroke="#bdbdbd" stroke-width="1" />
<rect x="117" y="610.3" width="61.00" height="2.20" fill="#217346" />
<text x="128.95" y="606.40" font-size="13" fill="#217346" font-weight="700" textLength="35.79" lengthAdjust="spacingAndGlyphs" >Лист1</text>
<text x="191.43" y="606.40" font-size="12.5" fill="#444" textLength="79.88" lengthAdjust="spacingAndGlyphs" >Справочники</text>
<line x1="286.5" y1="592" x2="286.5" y2="611.5" stroke="#a0a0a0" stroke-width="1" />
<circle cx="328" cy="602.2" r="7.3" fill="none" stroke="#6a6a6a" stroke-width="1.2" />
<path d="M324,602.2 h8 M328,598.2 v8" fill="none" stroke="#6a6a6a" stroke-width="1.3" />
<circle cx="548" cy="597.5" r="0.9" fill="#a5a5a5" />
<circle cx="548" cy="602" r="0.9" fill="#a5a5a5" />
<circle cx="548" cy="606.5" r="0.9" fill="#a5a5a5" />
<rect x="564.5" y="595.5" width="14.00" height="14.00" fill="#fff" stroke="#c6c6c6" stroke-width="1" />
<path d="M573.5,598.5 v7 l-4,-3.5 z" fill="#666" />
<rect x="579.5" y="595.5" width="108.00" height="14.00" fill="#fff" stroke="#c6c6c6" stroke-width="1" />
<rect x="688" y="595.5" width="177.50" height="14.00" fill="#d8d8d8" />
<rect x="865.5" y="595.5" width="14.00" height="14.00" fill="#fff" stroke="#c6c6c6" stroke-width="1" />
<path d="M870.5,598.5 v7 l4,-3.5 z" fill="#666" />
<rect x="17" y="617" width="883.00" height="16.00" fill="#f3f2f1" />
<text x="24.45" y="631.00" font-size="12.5" fill="#444" textLength="37.24" lengthAdjust="spacingAndGlyphs" >Готово</text>
<rect x="89.5" y="621.5" width="13.00" height="11.50" fill="none" stroke="#555" stroke-width="1" />
<line x1="89.5" y1="624" x2="102.5" y2="624" stroke="#555" stroke-width="1" />
<circle cx="99" cy="630" r="3.5" fill="#fff" stroke="#555" stroke-width="1" />
<circle cx="99" cy="630" r="1.5" fill="#555" />
<text x="488.36" y="630.60" font-size="12.5" fill="#444" textLength="81.22" lengthAdjust="spacingAndGlyphs" >Количество: 47</text>
<rect x="587.2" y="617" width="39.80" height="16.00" fill="#d4d4d4" />
<rect x="600.5" y="620.5" width="12.00" height="12.50" fill="none" stroke="#555" stroke-width="1" />
<line x1="604.5" y1="620.5" x2="604.5" y2="633" stroke="#555" stroke-width="1" />
<line x1="608.5" y1="620.5" x2="608.5" y2="633" stroke="#555" stroke-width="1" />
<line x1="600.5" y1="624.5" x2="612.5" y2="624.5" stroke="#555" stroke-width="1" />
<line x1="600.5" y1="628.5" x2="612.5" y2="628.5" stroke="#555" stroke-width="1" />
<rect x="640.5" y="620.5" width="13.00" height="12.50" fill="none" stroke="#555" stroke-width="1" />
<rect x="643.5" y="623.5" width="7.00" height="9.50" fill="none" stroke="#555" stroke-width="1" />
<line x1="645" y1="626" x2="649" y2="626" stroke="#555" stroke-width="1" />
<line x1="645" y1="628.5" x2="649" y2="628.5" stroke="#555" stroke-width="1" />
<path d="M680.5,633 v-12.5 h13 v12.5 M686.5,620.5 v7 h-6 M693.5,627.5 h-7" fill="none" stroke="#555" stroke-width="1" />
<line x1="713.8" y1="627.5" x2="720.7" y2="627.5" stroke="#555" stroke-width="1.1" />
<line x1="726" y1="627.5" x2="826" y2="627.5" stroke="#a8a8a8" stroke-width="1" />
<rect x="774" y="621.4" width="5.40" height="11.60" fill="#6b6b6b" />
<path d="M830.4,627.5 h8.3 M834.5,623.4 v8.3" fill="none" stroke="#555" stroke-width="1.1" />
<text x="851.67" y="630.60" font-size="12.5" fill="#444" textLength="30.92" lengthAdjust="spacingAndGlyphs" >100 %</text>
<rect x="266.5" y="155.5" width="392.80" height="330.20" fill="#f3f3f3" stroke="#cfcfcf" stroke-width="1" rx="7" filter="url(#fDlg)"/>
<text x="274.43" y="175.80" font-size="12.5" fill="#8d8d8d" textLength="167.90" lengthAdjust="spacingAndGlyphs" >Проверка вводимых значений</text>
<text x="587.50" y="175.40" font-size="12.5" fill="#8d8d8d" >?</text>
<path d="M631,165 l9.8,9.6 M640.8,165 l-9.8,9.6" fill="none" stroke="#777" stroke-width="1" />
<rect x="273.5" y="214.5" width="377.00" height="231.00" fill="#f9f9f9" stroke="#dadada" stroke-width="1" />
<rect x="274.5" y="195.5" width="77.00" height="19.00" fill="#f3f3f3" stroke="#dadada" stroke-width="1" />
<rect x="351.5" y="195.5" width="122.50" height="19.00" fill="#f3f3f3" stroke="#dadada" stroke-width="1" />
<text x="282.67" y="211.00" font-size="12" fill="#1b1b1b" stroke="#1b1b1b" stroke-width="0.25" textLength="61.83" lengthAdjust="spacingAndGlyphs" >Параметры</text>
<text x="360.63" y="211.00" font-size="12" fill="#1b1b1b" stroke="#1b1b1b" stroke-width="0.25" textLength="109.39" lengthAdjust="spacingAndGlyphs" >Подсказка по вводу</text>
<rect x="473.5" y="191.5" width="146.00" height="23.50" fill="#f9f9f9" stroke="#dadada" stroke-width="1" />
<rect x="474" y="214" width="145.00" height="2.00" fill="#f9f9f9" />
<text x="483.60" y="209.40" font-size="12" fill="#1b1b1b" stroke="#1b1b1b" stroke-width="0.25" textLength="125.53" lengthAdjust="spacingAndGlyphs" >Сообщение об ошибке</text>
<rect x="281.9" y="225.3" width="12.70" height="12.50" fill="#0d62b8" rx="2.5" />
<path d="M284.8,231.5 l2.6,2.6 l4.6,-4.8" fill="none" stroke="#fff" stroke-width="1.1" />
<text x="298.34" y="236.20" font-size="12" fill="#1b1b1b" stroke="#1b1b1b" stroke-width="0.25" textLength="179.08" lengthAdjust="spacingAndGlyphs" >Выводить сообщение об ошибке</text>
<line x1="442.4" y1="237.9" x2="451.1" y2="237.9" stroke="#1b1b1b" stroke-width="1.1" />
<text x="281.76" y="262.30" font-size="12" fill="#1b1b1b" stroke="#1b1b1b" stroke-width="0.25" textLength="337.30" lengthAdjust="spacingAndGlyphs" >При попытке ввода неверных данных отображать сообщение:</text>
<line x1="622" y1="258.5" x2="645" y2="258.5" stroke="#dcdcdc" stroke-width="1" />
<text x="289.94" y="281.90" font-size="11.6" fill="#1b1b1b" stroke="#1b1b1b" stroke-width="0.25" textLength="24.32" lengthAdjust="spacingAndGlyphs" >Вид:</text>
<line x1="291" y1="283.9" x2="298" y2="283.9" stroke="#1b1b1b" stroke-width="1.2" />
<rect x="291.5" y="287.5" width="155.50" height="21.00" fill="#fff" stroke="#bdbdbd" stroke-width="1" />
<line x1="425.5" y1="288" x2="425.5" y2="308" stroke="#e0e0e0" stroke-width="1" />
<path d="M429,296 l4,4 l4,-4" fill="none" stroke="#777" stroke-width="1" />
<text x="295.26" y="302.00" font-size="12" fill="#1b1b1b" stroke="#1b1b1b" stroke-width="0.25" textLength="56.24" lengthAdjust="spacingAndGlyphs" >Остановка</text>
<circle cx="367" cy="369.6" r="16" fill="#f4f4f4" stroke="#858585" stroke-width="1" />
<circle cx="367" cy="369.6" r="14" fill="url(#gErr)" />
<path d="M360.6,363.2 l12.8,12.8 M373.4,363.2 l-12.8,12.8" fill="none" stroke="#e6e6e6" stroke-width="3.6" />
<text x="451.81" y="281.80" font-size="11.6" fill="#1b1b1b" stroke="#1b1b1b" stroke-width="0.25" textLength="59.47" lengthAdjust="spacingAndGlyphs" >Заголовок:</text>
<line x1="452.2" y1="283.8" x2="458" y2="283.8" stroke="#1b1b1b" stroke-width="1.2" />
<rect x="452.5" y="287.5" width="191.00" height="19.00" fill="#fff" stroke="#bdbdbd" stroke-width="1" />
<text x="455.22" y="300.60" font-size="11.6" fill="#1b1b1b" stroke="#1b1b1b" stroke-width="0.25" textLength="132.51" lengthAdjust="spacingAndGlyphs" >Некорректное значение</text>
<text x="451.91" y="322.80" font-size="11.6" fill="#1b1b1b" stroke="#1b1b1b" stroke-width="0.25" textLength="66.04" lengthAdjust="spacingAndGlyphs" >Сообщение:</text>
<line x1="473" y1="324.7" x2="479.9" y2="324.7" stroke="#1b1b1b" stroke-width="1.2" />
<rect x="452.5" y="328.5" width="191.00" height="83.00" fill="#fff" stroke="#bdbdbd" stroke-width="1" />
<rect x="626" y="329" width="17.00" height="82.00" fill="#f0f0f0" />
<path d="M630.5,343 h8 l-4,-4.5 z" fill="#a6a6a6" />
<path d="M630.5,397 h8 l-4,4.5 z" fill="#a6a6a6" />
<text x="455.26" y="342.30" font-size="12" fill="#1b1b1b" stroke="#1b1b1b" stroke-width="0.25" textLength="107.53" lengthAdjust="spacingAndGlyphs" >Используйте только</text>
<text x="456.09" y="355.40" font-size="12" fill="#1b1b1b" stroke="#1b1b1b" stroke-width="0.25" textLength="168.84" lengthAdjust="spacingAndGlyphs" >допустимые обозначения: Я, В,</text>
<text x="455.30" y="368.50" font-size="12" fill="#1b1b1b" stroke="#1b1b1b" stroke-width="0.25" textLength="48.16" lengthAdjust="spacingAndGlyphs" >Б, О, П, К</text>
<rect x="273.8" y="456.6" width="86.20" height="20.40" fill="#fdfdfd" stroke="#d5d5d5" stroke-width="1" rx="4" />
<text x="280.96" y="471.50" font-size="12" fill="#1b1b1b" stroke="#1b1b1b" stroke-width="0.25" textLength="70.85" lengthAdjust="spacingAndGlyphs" >Очистить все</text>
<line x1="289.8" y1="473.8" x2="296.8" y2="473.8" stroke="#1b1b1b" stroke-width="1.1" />
<rect x="494.5" y="456.5" width="73.00" height="21.00" fill="#fdfdfd" stroke="#0067c0" stroke-width="1.2" rx="4" />
<text x="522.65" y="471.50" font-size="12" fill="#1b1b1b" stroke="#1b1b1b" stroke-width="0.25" textLength="15.32" lengthAdjust="spacingAndGlyphs" >OK</text>
<rect x="578.5" y="456.6" width="72.50" height="20.40" fill="#fdfdfd" stroke="#d5d5d5" stroke-width="1" rx="4" />
<text x="594.06" y="471.50" font-size="12" fill="#1b1b1b" stroke="#1b1b1b" stroke-width="0.25" textLength="40.54" lengthAdjust="spacingAndGlyphs" >Отмена</text>
<g filter="url(#fRed)">
<rect x="465.4" y="186.6" width="163.30" height="37.60" fill="none" stroke="#fa0a0a" stroke-width="4.4" rx="9" />
<rect x="444" y="264" width="207.80" height="159.80" fill="none" stroke="#fa0a0a" stroke-width="4.4" rx="9" />
</g>
<g filter="url(#fCirc)">
<circle cx="458.5" cy="174.3" r="23.2" fill="url(#gOrange)" stroke="#c0341a" stroke-width="0.9" />
</g>
<path d="M455.5,164 L462.3,164 L462.3,184.6 L455.6,184.6 L455.6,172.2 L452,173.6 L452,168.3 Z" fill="#fff" stroke="#151515" stroke-width="3.2" paint-order="stroke" stroke-linejoin="round"/>
<g filter="url(#fCirc)">
<circle cx="431.4" cy="431.7" r="23.2" fill="url(#gOrange)" stroke="#c0341a" stroke-width="0.9" />
</g>
<text x="431.3" y="442.4" font-size="29" font-weight="700" text-anchor="middle" fill="#151515" stroke="#151515" stroke-width="4" stroke-linejoin="round" textLength="15" lengthAdjust="spacingAndGlyphs">2</text>
<text x="431.3" y="442.4" font-size="29" font-weight="700" text-anchor="middle" fill="#fff" stroke="#fff" stroke-width="0.9" stroke-linejoin="round" textLength="15" lengthAdjust="spacingAndGlyphs">2</text>
</svg></body></html>
